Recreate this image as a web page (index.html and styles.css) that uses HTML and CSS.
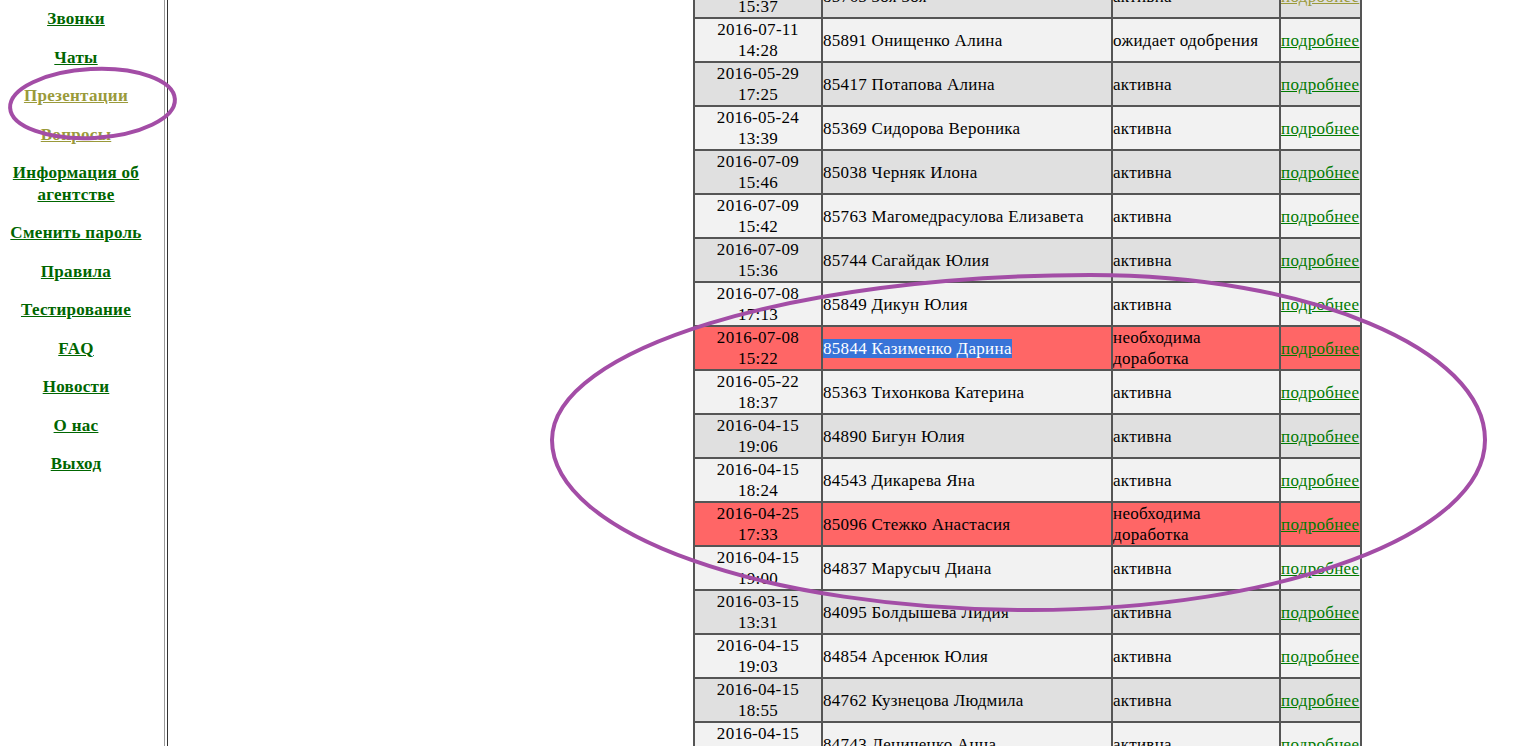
FILE: index.html
```html
<!DOCTYPE html>
<html lang="ru">
<head>
<meta charset="utf-8">
<title>Анкеты</title>
<link rel="stylesheet" href="styles.css">
</head>
<body>
<div class="page">
  <nav class="sidebar">
    <a class="nav-link" href="#">Звонки</a>
    <a class="nav-link" href="#">Чаты</a>
    <a class="nav-link visited" href="#">Презентации</a>
    <a class="nav-link visited" href="#">Вопросы</a>
    <a class="nav-link" href="#">Информация об агентстве</a>
    <a class="nav-link" href="#">Сменить пароль</a>
    <a class="nav-link" href="#">Правила</a>
    <a class="nav-link" href="#">Тестирование</a>
    <a class="nav-link" href="#">FAQ</a>
    <a class="nav-link" href="#">Новости</a>
    <a class="nav-link" href="#">О нас</a>
    <a class="nav-link" href="#">Выход</a>
  </nav>
  <main class="main">
    <table class="list">
      <tbody>
        <tr class="dark"><td class="c-date">2016-07-11<br>15:37</td><td class="c-name">85765 Зоя Зоя</td><td class="c-status">активна</td><td class="c-link"><a class="more visited" href="#">подробнее</a></td></tr>
        <tr class="light"><td class="c-date">2016-07-11<br>14:28</td><td class="c-name">85891 Онищенко Алина</td><td class="c-status">ожидает одобрения</td><td class="c-link"><a class="more" href="#">подробнее</a></td></tr>
        <tr class="dark"><td class="c-date">2016-05-29<br>17:25</td><td class="c-name">85417 Потапова Алина</td><td class="c-status">активна</td><td class="c-link"><a class="more" href="#">подробнее</a></td></tr>
        <tr class="light"><td class="c-date">2016-05-24<br>13:39</td><td class="c-name">85369 Сидорова Вероника</td><td class="c-status">активна</td><td class="c-link"><a class="more" href="#">подробнее</a></td></tr>
        <tr class="dark"><td class="c-date">2016-07-09<br>15:46</td><td class="c-name">85038 Черняк Илона</td><td class="c-status">активна</td><td class="c-link"><a class="more" href="#">подробнее</a></td></tr>
        <tr class="light"><td class="c-date">2016-07-09<br>15:42</td><td class="c-name">85763 Магомедрасулова Елизавета</td><td class="c-status">активна</td><td class="c-link"><a class="more" href="#">подробнее</a></td></tr>
        <tr class="dark"><td class="c-date">2016-07-09<br>15:36</td><td class="c-name">85744 Сагайдак Юлия</td><td class="c-status">активна</td><td class="c-link"><a class="more" href="#">подробнее</a></td></tr>
        <tr class="light"><td class="c-date">2016-07-08<br>17:13</td><td class="c-name">85849 Дикун Юлия</td><td class="c-status">активна</td><td class="c-link"><a class="more" href="#">подробнее</a></td></tr>
        <tr class="red"><td class="c-date">2016-07-08<br>15:22</td><td class="c-name"><span class="sel">85844 Казименко Дарина</span></td><td class="c-status">необходима<br>доработка</td><td class="c-link"><a class="more" href="#">подробнее</a></td></tr>
        <tr class="light"><td class="c-date">2016-05-22<br>18:37</td><td class="c-name">85363 Тихонкова Катерина</td><td class="c-status">активна</td><td class="c-link"><a class="more" href="#">подробнее</a></td></tr>
        <tr class="dark"><td class="c-date">2016-04-15<br>19:06</td><td class="c-name">84890 Бигун Юлия</td><td class="c-status">активна</td><td class="c-link"><a class="more" href="#">подробнее</a></td></tr>
        <tr class="light"><td class="c-date">2016-04-15<br>18:24</td><td class="c-name">84543 Дикарева Яна</td><td class="c-status">активна</td><td class="c-link"><a class="more" href="#">подробнее</a></td></tr>
        <tr class="red"><td class="c-date">2016-04-25<br>17:33</td><td class="c-name">85096 Стежко Анастасия</td><td class="c-status">необходима<br>доработка</td><td class="c-link"><a class="more" href="#">подробнее</a></td></tr>
        <tr class="light"><td class="c-date">2016-04-15<br>19:00</td><td class="c-name">84837 Марусыч Диана</td><td class="c-status">активна</td><td class="c-link"><a class="more" href="#">подробнее</a></td></tr>
        <tr class="dark"><td class="c-date">2016-03-15<br>13:31</td><td class="c-name">84095 Болдышева Лидия</td><td class="c-status">активна</td><td class="c-link"><a class="more" href="#">подробнее</a></td></tr>
        <tr class="light"><td class="c-date">2016-04-15<br>19:03</td><td class="c-name">84854 Арсенюк Юлия</td><td class="c-status">активна</td><td class="c-link"><a class="more" href="#">подробнее</a></td></tr>
        <tr class="dark"><td class="c-date">2016-04-15<br>18:55</td><td class="c-name">84762 Кузнецова Людмила</td><td class="c-status">активна</td><td class="c-link"><a class="more" href="#">подробнее</a></td></tr>
        <tr class="light"><td class="c-date">2016-04-15<br>18:50</td><td class="c-name">84743 Лениченко Анна</td><td class="c-status">активна</td><td class="c-link"><a class="more" href="#">подробнее</a></td></tr>
      </tbody>
    </table>
  </main>
</div>
<svg class="marks" width="1516" height="746" viewBox="0 0 1516 746" aria-hidden="true">
  <ellipse cx="92.5" cy="103.5" rx="82.5" ry="34.5" transform="rotate(-3 92.5 103.5)" fill="none" stroke="#a34da6" stroke-width="4"/>
  <path d="M552 440 C552 348.9 792.9 275 1090 275 C1308.2 275 1485 348.9 1485 440 C1485 533.9 1281.3 610 1030 610 C766 610 552 533.9 552 440 Z" fill="none" stroke="#a34da6" stroke-width="4"/>
</svg>
</body>
</html>
```

FILE: styles.css
```css
html, body {
  margin: 0;
  padding: 0;
  height: 100%;
  overflow: hidden;
  background: #ffffff;
}

body {
  font-family: "Liberation Serif", "Times New Roman", serif;
  font-size: 17px;
  letter-spacing: 0.3px;
  color: #000;
  position: relative;
}

.page {
  display: flex;
  height: 746px;
}

.sidebar {
  box-sizing: border-box;
  width: 165px;
  flex: none;
  border-right: 1px solid #9a9a9a;
  padding: 8px 12px 0 0;
  display: flex;
  flex-direction: column;
  align-items: center;
  gap: 17px;
  text-align: center;
  line-height: 21.5px;
}

.nav-link {
  font-weight: bold;
  color: #006600;
  text-decoration: underline;
}

.nav-link.visited {
  color: #9a9a3a;
}

.main {
  flex: 1;
  margin-left: 2px;
  border-left: 1px solid #333;
  padding-left: 525px;
  overflow: hidden;
}

.list {
  border-collapse: separate;
  border-spacing: 0;
  table-layout: fixed;
  width: 669px;
  margin-top: -27px;
  border-left: 2px solid #555;
  border-top: 2px solid #555;
  line-height: 21px;
}

.list td {
  box-sizing: border-box;
  height: 44px;
  padding: 0;
  border-right: 2px solid #555;
  border-bottom: 2px solid #555;
  vertical-align: middle;
  text-align: left;
  white-space: nowrap;
  overflow: hidden;
}

.list td.c-date {
  width: 128px;
  text-align: center;
}

.list td.c-name {
  width: 290px;
}

.list td.c-status {
  width: 168px;
}

.list td.c-link {
  width: 81px;
}

tr.dark td { background: #e0e0e0; }
tr.light td { background: #f2f2f2; }
tr.red td { background: #ff6666; }

.more {
  color: #007a00;
  text-decoration: underline;
}

.more.visited {
  color: #9a9a3a;
}

.sel {
  background: #3874d8;
  color: #ffffff;
}

.marks {
  position: absolute;
  left: 0;
  top: 0;
  pointer-events: none;
}
```
